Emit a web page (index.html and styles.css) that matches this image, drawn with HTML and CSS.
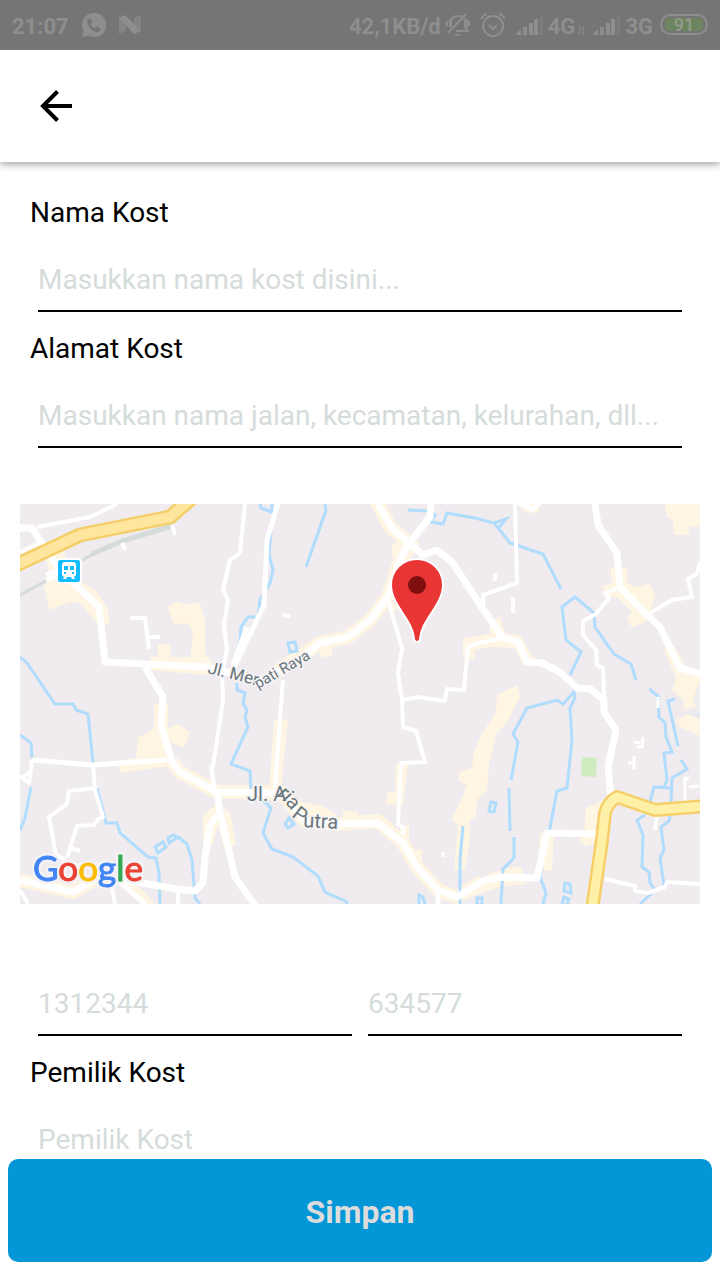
FILE: index.html
```html
<!DOCTYPE html>
<html lang="id">
<head>
<meta charset="utf-8">
<meta name="viewport" content="width=device-width, initial-scale=1">
<title>Tambah Kost</title>
<link rel="stylesheet" href="styles.css">
</head>
<body>
<div class="status">
  <div class="status-left">
    <span>21:07</span>
    <svg width="24" height="24" viewBox="0 0 24 24"><path fill="currentColor" fill-rule="evenodd" d="M12 0a12 12 0 1 1-5.500 22.500L0 24l1.500-6A12 12 0 0 1 12 0zM8 5.500C5 6 5 9 6 11.500c1.500 3.500 4 6 7.500 7.200 2.500.8 4.800-.5 5-3.200l-3.500-2-2 2c-2-.7-3.800-2.500-4.500-4.500l1.800-1.800z"/></svg>
    <svg width="22" height="20" viewBox="0 0 22 20"><path fill="currentColor" opacity=".6" d="M0 3l7-2v15l-7 3zM15 3l7-3v16l-7 3z"/><path fill="currentColor" d="M0 3l6-3 16 16-7 3z"/></svg>
  </div>
  <div class="status-right">
    <span>42,1KB/d</span>
    <svg width="24" height="24" viewBox="0 0 24 24" fill="none" stroke="currentColor" stroke-width="2"><path d="M10 18h12l-3-4V9c0-4-3-6-7-6-5 0-7 3-7 7v4M20 1L2 20M1 8v5M4 6v8M21 6v8M23 8v5"/><path d="M8 21h7l-2 2h-3z" fill="currentColor" stroke="none"/></svg>
    <svg width="36" height="24" viewBox="0 0 36 24" fill="none" stroke="currentColor" stroke-width="2"><circle cx="18" cy="13" r="10"/><path d="M14 12l4 4 4-4M6 6q2-4 6-5M30 6q-2-4-6-5"/></svg>
    <svg width="27" height="20" viewBox="0 0 27 20" fill="currentColor"><path d="M0 20q1-4 5-5v5zM7 12h4v8H7zM13 8h4v12h-4zM18 4h4v16h-4z"/><path opacity=".35" d="M24 0h3v20h-3z"/></svg>
    <span class="network">4G<svg width="9" height="9" viewBox="0 0 9 9" fill="none" stroke="currentColor"><path d="M3 0v8L1 6M6 9V1l2 2"/></svg></span>
    <svg width="27" height="20" viewBox="0 0 27 20" fill="currentColor"><path d="M0 20q1-4 5-5v5zM7 12h4v8H7zM13 8h4v12h-4zM18 4h4v16h-4z"/><path opacity=".35" d="M24 0h3v20h-3z"/></svg>
    <span>3G</span>
    <svg width="50" height="22" viewBox="0 0 50 22"><rect x="3" y="1" width="46" height="19" rx="9.500" fill="none" stroke="currentColor" stroke-width="2"/><rect x="7" y="4" width="38" height="13" rx="5" fill="#6c8460"/><text class="battery-text" x="26" y="17" text-anchor="middle">91</text></svg>
  </div>
</div>

<header class="appbar">
  <button class="back" type="button" aria-label="Kembali">
    <svg width="32" height="32" viewBox="0 0 32 32" fill="none" stroke="#000" stroke-width="4"><path d="M32 16H3M17.500 1.500L3 16l14.500 14.500"/></svg>
  </button>
</header>

<main class="form">
  <div class="field">
    <label for="nama">Nama Kost</label>
    <input id="nama" type="text" placeholder="Masukkan nama kost disini...">
  </div>
  <div class="field">
    <label for="alamat">Alamat Kost</label>
    <input id="alamat" type="text" placeholder="Masukkan nama jalan, kecamatan, kelurahan, dll...">
  </div>

  <svg class="map" viewBox="20 504 680 400" role="img" aria-label="Peta lokasi kost">
    <rect x="20" y="504" width="680" height="400" fill="#efebee"/>
    <g fill="#fef5e3">
      <path d="M45 557L64 548 70 575 95 590 108 608 109 624 97 624 80 603 71 602 49 610 44 585 50 575z"/>
      <path d="M168 607L178 601 183 604 200 603 205 620V653L213 663 207 675 148 670 150 657H158V644L170 645 171 657H190L193 633 188 623 174 625z"/>
      <path d="M154 704H168V728L178 724 190 732 184 748 170 742 176 765 120 773 118 761 136 758 138 737 148 733 154 726z"/>
      <path d="M203 815L215 805 230 812 236 845 224 848 218 825 213 845H203z"/>
      <path d="M274 720H288L281 790H269zM396 764H408L403 806 386 804 388 792H395z"/>
      <path d="M497 695L517 685 520 697 507 722 496 735 489 765 487 790 477 800 476 816 470 820V838L465 870H454L458 825 452 820 455 812 461 800 467 785 458 780 459 772 472 768 474 752 481 735 496 712z"/>
      <path d="M610 567L627 568V582L637 587 650 583 655 597 650 612 655 617 632 628 627 618 632 612 617 597H607L602 587 612 583z"/>
      <path d="M665 504H700V527L690 526 688 535H674L673 520 667 517zM515 504H541L538 512 528 513z"/>
      <path d="M664 650L674 645 685 665 700 670V680L693 700 697 706 684 710 683 700 672 690 676 678zM675 720L690 713 700 718V736L680 727z"/>
      <path d="M490 620L500 617 505 634 520 635 535 660 524 666 515 648 490 647 475 650V660L463 658V638L490 634z"/>
      <path d="M586 808L602 801 600 840 586 847 579 840 584 835zM392 544L415 538 420 545 405 566 392 556zM388 600L400 607 390 614zM319 645L333 643 332 656 320 657zM343 811H358V820H343zM415 850H422V866H415zM400 825H409V838H400zM467 898L490 873 521 866 526 884 500 887zM120 882L134 882 155 904H144z"/>
      <path d="M277 787L302 802 322 806 336 814 336 826 305 825z"/>
    </g>
    <g fill="none" stroke="#fef5e3" stroke-width="14">
      <path d="M275 673L320 643 348 637 370 620 388 597 400 560 408 545M376 500L390 527 408 542"/>
      <path d="M172 762L180 772 217 792 250 792M245 792L282 793 305 821 340 824 378 821 403 843 417 867 438 890 457 897 483 881M545 870L547 833M20 880L73 892 97 878"/>
    </g>
    <path d="M582 757L597 758 596 777 581 776z" fill="#ceecc0"/>
    <path d="M686 713L700 712V719z" fill="#e4eaec"/>
    <g class="water">
      <path d="M20 657L27 663 55 704H73L76 710 88 714 93 763M20 735L31 743 32 758M31 787L25 818 20 830"/>
      <path d="M97 788L106 823H117L120 833 148 857 156 858 159 873 160 904M155 847L163 842 166 847 158 853zM168 838L173 835 178 837 169 843zM178 837L187 844 192 860 195 898 200 904"/>
      <path d="M271 530L269 555 273 570 270 583 260 600 258 617H248L241 627 240 643M260 504L261 508 272 512V504M325 504L326 510 306 567M288 643L295 642 297 651 290 652z"/>
      <path d="M237 683V690L245 693 243 703 247 710 245 717 248 727 231 764 250 771 251 792 265 802 271 808 263 833 272 849 293 857 318 876 325 892 345 901 348 904M285 824L289 818 294 824 288 828z"/>
      <path d="M463 826L460 860V904M419 904V895L423 897 425 904M408 510L427 511 435 515 430 522 443 524 447 513 475 518 494 523 510 543 543 554 561 589M494 523L506 519 498 529"/>
      <path d="M570 675L581 652 566 640 562 607 575 597 594 613 595 627 614 654 631 664 636 680"/>
      <path d="M511 780L518 742 513 734 527 708 557 700 563 704 574 692 575 698 570 708 572 740 567 788 557 791 549 833M509 788L510 831M514 837V858L503 869 501 904M491 802L496 803 494 812 489 811z"/>
      <path d="M542 867L540 877 546 893 543 904M565 883L570 884 571 893 564 891zM564 897L569 899 567 905H562zM477 898H482V905H477z"/>
      <path d="M649 689L658 696 659 717 665 723 666 737 672 752 664 753 667 780 664 787 654 787 650 802M675 699L668 701 678 746M681 760L687 769 672 778 671 802M654 787L671 788M645 815L637 820 643 835 642 867 649 872 650 883 655 890 640 904M670 816L669 821 661 827 664 850 660 858 664 885"/>
    </g>
    <path d="M18 596L46 581 100 550 122 541 172 526" fill="none" stroke="#d5dadb" stroke-width="3"/>
    <path d="M92 554L122 541 172 526" fill="none" stroke="#d5dadb" stroke-width="5"/>
    <g fill="none" stroke="#fff" stroke-linejoin="round" stroke-width="4">
      <path d="M37 527L90 517 117 504M20 552L40 543M122 543L125 550M172 525L175 535M130 618H145L149 649M148 637H160"/>
      <path d="M245 504L240 553 230 560 223 590 228 600 224 625 227 650 222 672 223 700 213 767H211L215 790M283 680L281 705 275 788M282 615L290 616"/>
      <path d="M388 600L402 648 398 673 402 700 418 697 445 701 447 689 464 690 468 647 475 644 502 638M402 700L403 727 416 731 425 762 401 763 398 825 403 827V835"/>
      <path d="M515 504L517 583 483 595V605M495 573V581M513 597V613M618 588L605 593 609 598 596 614 583 621V635L596 650 597 665 603 668 604 697M650 613L672 600 692 597 688 579 697 574 700 562"/>
      <path d="M605 879L635 886V891L648 893 665 887 667 882 700 884M655 830L657 815"/>
      <path d="M32 760L29 783 20 776M29 773L22 777M93 765L95 790 103 817 98 819 94 825 77 826 67 858M95 788L69 791 67 804 49 817 56 855 65 860M71 848L80 851M112 887L115 904M178 892V904M20 890L28 904"/>
    </g>
    <path d="M634 742L640 743M643 737L642 747H637M628 763H634M634 756V769M685 802V778L689 779M689 787L699 786M658 697V708M443 852V857" fill="none" stroke="#fff" stroke-width="3"/>
    <g fill="none" stroke="#fff" stroke-linejoin="round" stroke-width="5">
      <path d="M279 500L267 540 264 605 245 645 233 670M247 627L233 665M32 760L93 765 120 763 167 760M120 882L145 904M438 890V904M516 502L533 509 541 502M46 575L58 570M46 580L58 576"/>
    </g>
    <g fill="none" stroke="#fff" stroke-linejoin="round" stroke-width="7">
      <path d="M20 528H32L55 563 70 580 99 607 105 662 207 667 240 676 258 682 300 659 320 643 348 637 370 620 388 597 400 560 408 545 430 517 431 504"/>
      <path d="M378 504L392 528 408 542 423 555 437 550 452 562 475 597 502 637 518 642 527 662 542 663 560 672 577 688 590 689 604 700V712L616 730 608 767 611 796"/>
      <path d="M595 504L598 525 617 553 620 587 647 615 660 627 680 668 700 674M145 667L163 697 161 725 172 762 180 772 217 792 282 793 305 821 340 824 378 823 403 843 417 867 438 890 457 897 483 881 502 877 537 878 547 833 600 834"/>
      <path d="M217 792L220 812 235 877 257 908M220 813L210 825 205 857 203 883 195 891 177 889 142 883 100 876M20 880L73 892 97 878"/>
    </g>
    <g fill="none" stroke-linejoin="round">
      <path d="M10 568L80 535 170 517 192 498" stroke="#f4ce66" stroke-width="15"/>
      <path d="M10 568L80 535 170 517 192 498" stroke="#ffe69e" stroke-width="10"/>
      <path d="M592 910L602 840 605 813Q608 802 617 797L655 810 705 806" stroke="#f6cf68" stroke-width="14"/>
      <path d="M592 910L602 840 605 813Q608 802 617 797L655 810 705 806" stroke="#fff0a8" stroke-width="9"/>
    </g>
    <g>
      <rect x="57" y="559" width="24" height="24" rx="3" fill="#14bdff" stroke="#fff" stroke-width="2"/>
      <path d="M65 562h8q3 0 3 3v10l-2 2 1 2h-3l-1-2h-4l-1 2h-3l1-2-2-2v-10q0-3 3-3z" fill="#fff"/>
      <path d="M64 566h4v4h-4zM70 566h4v4h-4zM64 572h2v2h-2zM72 572h2v2h-2z" fill="#14bdff"/>
    </g>
    <g class="road-name">
      <text class="road-name-medium" transform="translate(207 673) rotate(14)">Jl. Mer</text>
      <text transform="translate(258 689) rotate(-30)">pati Raya</text>
    </g>
    <g class="road-name road-name-large">
      <text x="247" y="801">Jl. A</text>
      <text x="303" y="827" transform="rotate(3 303 827)">utra</text>
      <text class="no-halo" transform="translate(291 816) rotate(38)">P</text>
      <text class="no-halo" transform="translate(277 794) rotate(48)">ria</text>
    </g>
    <path d="M417 559C403 559 391 570 391 585C391 605 413 620 414 639Q414 642 417 642Q420 642 420 639C421 620 443 605 443 585C443 570 431 559 417 559z" fill="#ea3535" stroke="#fff" stroke-width="2"/>
    <circle cx="417" cy="585" r="9" fill="#80100f"/>
    <text class="map-brand" x="33" y="881"><tspan class="blue">G</tspan><tspan class="red">o</tspan><tspan class="yellow">o</tspan><tspan class="blue">g</tspan><tspan class="green">l</tspan><tspan class="red">e</tspan></text>
  </svg>

  <div class="coords">
    <input type="text" aria-label="Garis lintang" placeholder="1312344">
    <input type="text" aria-label="Garis bujur" placeholder="634577">
  </div>
  <div class="field">
    <label for="pemilik">Pemilik Kost</label>
    <input id="pemilik" type="text" placeholder="Pemilik Kost">
  </div>
</main>

<footer class="actions">
  <button class="save" type="submit">Simpan</button>
</footer>
</body>
</html>
```
FILE: styles.css
```css
* { box-sizing: border-box; }

body {
  margin: 0;
  height: 100vh;
  display: flex;
  flex-direction: column;
  background: #fff;
  color: #000;
  font-family: Roboto, "Liberation Sans", sans-serif;
  font-size: 28px;
}

svg { display: block; flex: none; }

.status {
  flex: none;
  display: flex;
  justify-content: space-between;
  align-items: center;
  height: 50px;
  padding: 0 12px;
  background: #757575;
  color: #8e8e8e;
  font-size: 22px;
  font-weight: 700;
  line-height: 28px;
  position: relative;
  z-index: 2;
}

.status span { padding-top: 3px; }

.status-left,
.status-right { display: flex; align-items: center; }
.status-left { gap: 13px; }
.status-right { gap: 5px; }

.network { display: flex; align-items: center; gap: 2px; margin-right: 2px; }
.network svg { margin-top: 8px; }

.battery-text { font-size: 18px; font-weight: 500; fill: #939c8e; }

.appbar {
  flex: none;
  display: flex;
  align-items: center;
  height: 112px;
  padding: 0 40px;
  background: #fff;
  box-shadow: 0 2px 8px rgba(0, 0, 0, .4);
  position: relative;
  z-index: 1;
}

.back {
  padding: 0;
  border: 0;
  background: none;
  cursor: pointer;
}

.form {
  flex: 1;
  min-height: 0;
  overflow-y: auto;
  scrollbar-width: none;
  padding: 32px 20px 0;
}

.field { padding: 0 10px; }
.field + .field,
.coords + .field { margin-top: 18px; }

label { display: block; height: 36px; line-height: 38px; }

input {
  display: block;
  min-width: 0;
  height: 82px;
  padding: 31px 0 13px;
  border: 0;
  border-bottom: 2px solid #000;
  border-radius: 0;
  background: none;
  color: #000;
  font: inherit;
  outline: none;
}

input::placeholder { color: #d5dcdb; opacity: 1; }

.field input { width: calc(100% - 16px); margin: 0 8px; }

.map { width: 100%; height: auto; margin: 56px 0 50px; }

.water { fill: none; stroke: #b0dcfd; stroke-width: 3px; }

.road-name {
  font-size: 15px;
  fill: #69757c;
  stroke: #f6f4f6;
  stroke-width: 3px;
  stroke-linejoin: round;
  paint-order: stroke;
}

.road-name-medium { font-size: 17px; }
.road-name-large { font-size: 20px; }
.no-halo { stroke: none; }

.map-brand {
  font-family: Lato, sans-serif;
  font-size: 35px;
  font-weight: 400;
  stroke-width: 1px;
  filter: drop-shadow(2px 0 #f5f2f5) drop-shadow(-2px 0 #f5f2f5) drop-shadow(0 2px #f5f2f5) drop-shadow(0 -2px #f5f2f5);
}

.blue { fill: #4285f4; stroke: #4285f4; }
.red { fill: #ea4335; stroke: #ea4335; }
.yellow { fill: #fbbc05; stroke: #fbbc05; }
.green { fill: #34a853; stroke: #34a853; }

.coords {
  display: grid;
  grid-template-columns: 1fr 1fr;
  gap: 16px;
  padding: 0 18px;
}

.actions { flex: none; padding: 0 8px 18px; }

.save {
  display: block;
  width: 100%;
  height: 103px;
  padding: 3px 0 0;
  border: 0;
  border-radius: 10px;
  background: #0497d8;
  color: #dcdcdc;
  font: inherit;
  font-size: 32px;
  font-weight: 700;
  cursor: pointer;
}
```
